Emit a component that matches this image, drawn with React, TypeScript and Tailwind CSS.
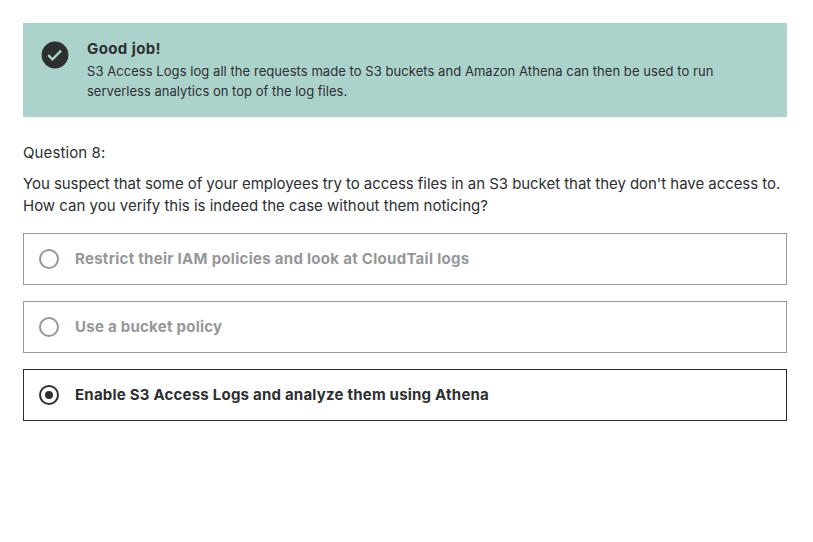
const options = [
  { text: 'Restrict their IAM policies and look at CloudTail logs', selected: false, tracking: 'tracking-[0.29px]' },
  { text: 'Use a bucket policy', selected: false, tracking: 'tracking-[0.26px]' },
  { text: 'Enable S3 Access Logs and analyze them using Athena', selected: true, tracking: 'tracking-[0.22px]' },
];

function Radio({ selected }: { selected: boolean }) {
  return (
    <span className="flex size-5 shrink-0 items-center justify-center rounded-full border-2 border-current">
      {selected && <span className="size-2 rounded-full bg-current" />}
    </span>
  );
}

export default function App() {
  return (
    <main className="min-h-screen bg-white px-[23px] pt-[23px] font-['Inter','Liberation_Sans',sans-serif] text-[#2d2f31]">
      <div className="w-[764px]">
        <section className="flex h-[94px] bg-[#acd2cc] pt-4 pl-[18px]">
          <svg className="mt-[2px] size-7 shrink-0" viewBox="0 0 28 28" aria-hidden="true">
            <circle cx="14" cy="14" r="13.4" fill="#2d2f31" />
            <path d="M7.2 14.2l4.2 4.2 8.7-8.7" fill="none" stroke="#acd2cc" strokeWidth="2.4" />
          </svg>
          <div className="ml-[18px]">
            <h2 className="text-[15px] leading-[19px] font-bold tracking-[0.4px] whitespace-nowrap">Good job!</h2>
            <p className="mt-[3px] text-[13px] leading-5 whitespace-nowrap">
              <span className="tracking-[0.055px]">S3 Access Logs log all the requests made to S3 buckets and Amazon Athena can then be used to run</span>
              <br />
              <span className="tracking-[0.01px]">serverless analytics on top of the log files.</span>
            </p>
          </div>
        </section>
        <p className="mt-[25px] text-[15px] leading-[22px] tracking-[0.1px]">Question 8:</p>
        <p className="mt-[9px] text-[15px] leading-[22px] whitespace-nowrap">
          <span className="tracking-[-0.047px]">You suspect that some of your employees try to access files in an S3 bucket that they don't have access to.</span>
          <br />
          <span>How can you verify this is indeed the case without them noticing?</span>
        </p>
        <div className="mt-4 flex flex-col gap-4">
          {options.map((o) => (
            <div
              key={o.text}
              className={
                'flex h-[52px] items-center gap-4 border px-[15px] ' +
                (o.selected ? 'border-[#2d2f31] text-[#2d2f31]' : 'border-[#969798] text-[#969798]')
              }
            >
              <Radio selected={o.selected} />
              <span className={'text-[15px] leading-[22px] font-bold whitespace-nowrap ' + o.tracking}>{o.text}</span>
            </div>
          ))}
        </div>
      </div>
    </main>
  );
}
